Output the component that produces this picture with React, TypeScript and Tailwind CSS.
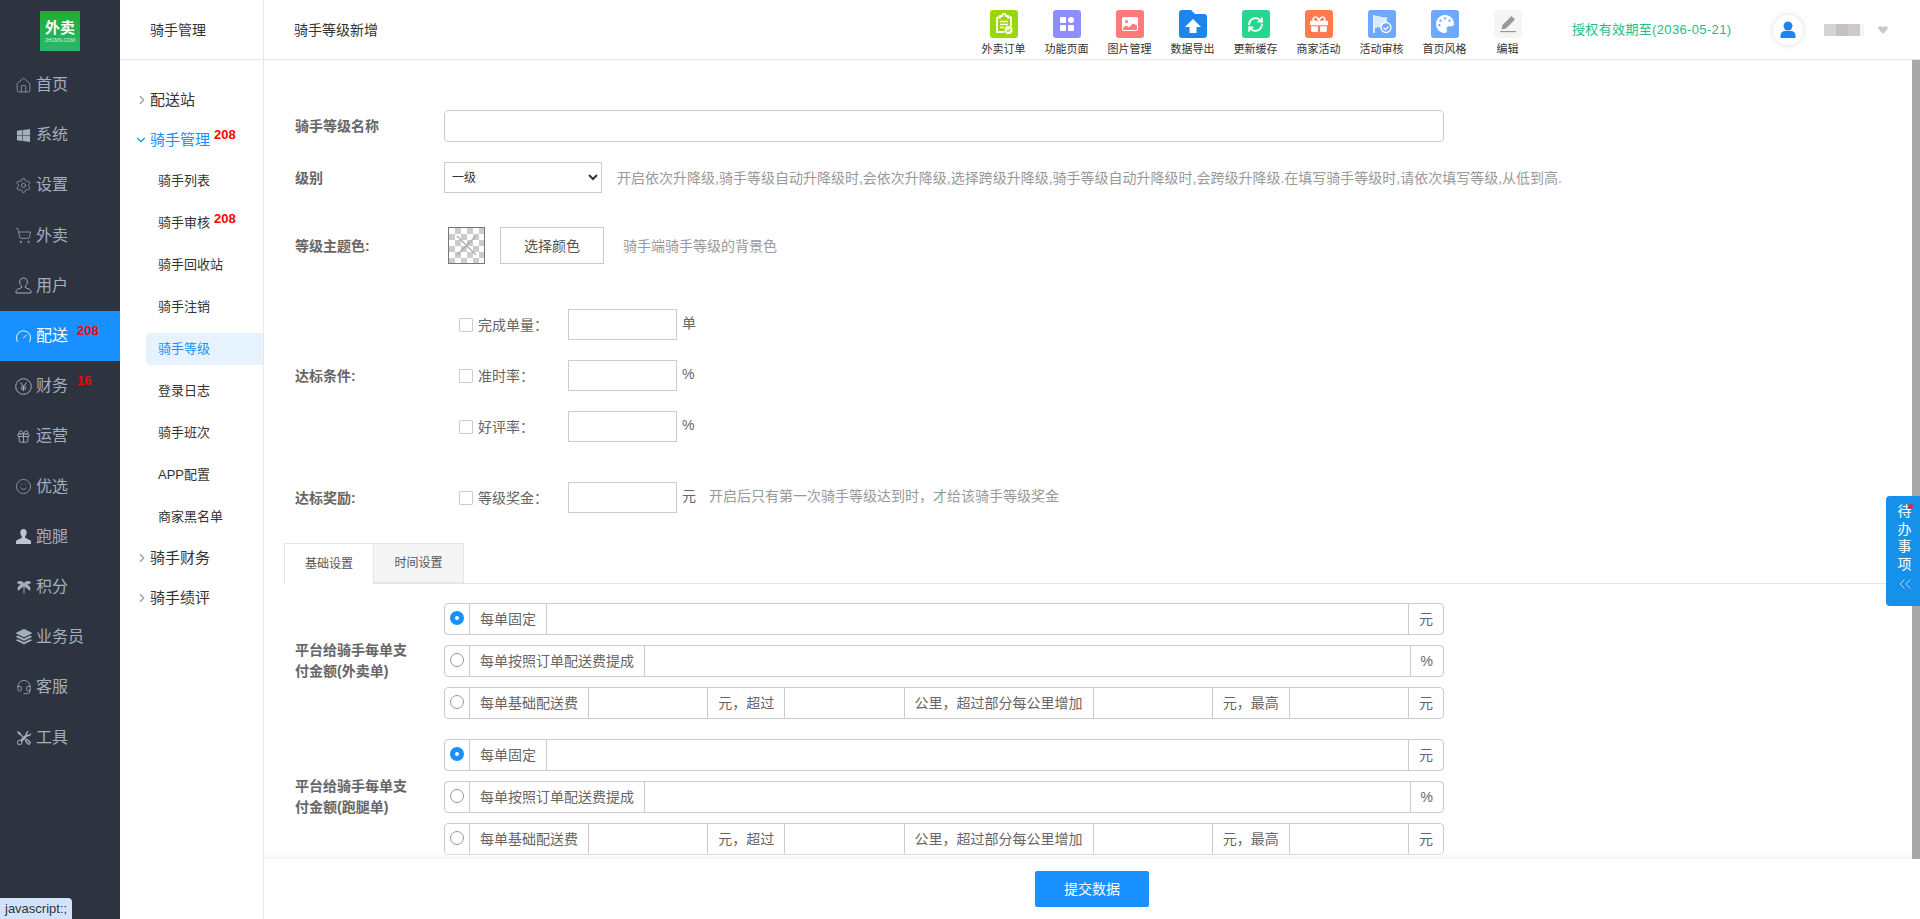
import type { ReactNode } from "react";
import {
  ChevronDown,
  ChevronRight,
  ChevronsLeft,
  Gauge,
  Gift,
  Headset,
  Home,
  RefreshCw,
  Settings,
  ShoppingCart,
  Smile,
} from "lucide-react";
import { BsFillImageFill, BsStack, BsTools } from "react-icons/bs";
import { FaGift, FaPalette, FaWindows } from "react-icons/fa";
import { PiTreePalmFill } from "react-icons/pi";

const navItems: { label: string; icon: ReactNode; badge?: string; active?: boolean }[] = [
  { label: "首页", icon: <Home size={19} strokeWidth={1} /> },
  { label: "系统", icon: <FaWindows size={15} /> },
  { label: "设置", icon: <Settings size={19} strokeWidth={1} /> },
  { label: "外卖", icon: <ShoppingCart size={19} strokeWidth={1} /> },
  {
    label: "用户",
    icon: (
      <svg width="17" height="17" viewBox="0 0 17 17" fill="none" stroke="currentColor">
        <path d="M8.500 1c2.300 0 3.800 1.700 3.800 4 0 2-1 3.300-2 4v1.500l4 1.800c1 .4 1.700 1.200 1.700 2.200v1.500H1V14.500c0-1 .7-1.800 1.700-2.200l4-1.800V9c-1-.7-2-2-2-4 0-2.300 1.500-4 3.800-4z" />
      </svg>
    ),
  },
  { label: "配送", icon: <Gauge size={19} strokeWidth={1.3} />, badge: "208", active: true },
  {
    label: "财务",
    icon: (
      <svg width="17" height="17" viewBox="0 0 17 17" fill="none" stroke="currentColor">
        <circle cx="8.500" cy="8.500" r="7.800" />
        <path d="M5.500 4.500 8.500 8.500 11.500 4.500M8.500 8.500V13M5.800 9H11.200M5.800 11H11.200" />
      </svg>
    ),
    badge: "16",
  },
  { label: "运营", icon: <Gift size={15} strokeWidth={1.5} /> },
  { label: "优选", icon: <Smile size={17} strokeWidth={1} /> },
  {
    label: "跑腿",
    icon: (
      <svg width="15" height="15" viewBox="0 0 15 15" fill="#bcc6d2">
        <path d="M7.500 0c2 0 3.200 1.500 3.200 3.500 0 1.500-.7 3-1.500 3.700v1.500l5 2.500c.5.300.8.700.8 1.300V15H0v-2.500c0-.6.300-1 .8-1.300l5-2.500V7.200C5 6.500 4.300 5 4.300 3.500 4.300 1.500 5.500 0 7.500 0z" />
      </svg>
    ),
  },
  { label: "积分", icon: <PiTreePalmFill size={16} /> },
  { label: "业务员", icon: <BsStack size={16} /> },
  { label: "客服", icon: <Headset size={16} strokeWidth={1.2} /> },
  { label: "工具", icon: <BsTools size={14} /> },
];

const subItems: { label: string; badge?: string; active?: boolean }[] = [
  { label: "骑手列表" },
  { label: "骑手审核", badge: "208" },
  { label: "骑手回收站" },
  { label: "骑手注销" },
  { label: "骑手等级", active: true },
  { label: "登录日志" },
  { label: "骑手班次" },
  { label: "APP配置" },
  { label: "商家黑名单" },
];

const tools: { label: string; bg: string; icon: ReactNode }[] = [
  {
    label: "外卖订单",
    bg: "bg-[#9ad60c]",
    icon: (
      <svg width="18" height="22" viewBox="0 0 18 22" fill="none">
        <path d="M2 4.500h3V3h2a2 2 0 0 1 4 0h2v1.500h3v9M2 4.500V19h7" stroke="#fff" strokeWidth="1.800" />
        <path d="M5 8.500h8M5 11.500h8M5 14.500h4" stroke="#fff" strokeWidth="1.500" />
        <circle cx="13.500" cy="17" r="4" fill="#fff" />
        <path d="m11.500 17 1.500 1.500 2.500-2.500" stroke="#9ad60c" strokeWidth="1.200" />
      </svg>
    ),
  },
  {
    label: "功能页面",
    bg: "bg-[#8e8eff]",
    icon: (
      <div className="grid grid-cols-2 gap-[2px]">
        <div className="w-[6px] h-[6px] bg-white rounded-[1px]" />
        <div className="w-[6px] h-[6px] bg-white rounded-full" />
        <div className="w-[6px] h-[6px] bg-white rounded-[1px]" />
        <div className="w-[6px] h-[6px] bg-white rounded-[1px]" />
      </div>
    ),
  },
  { label: "图片管理", bg: "bg-[#ff7b7b]", icon: <BsFillImageFill size={16} color="#fff" /> },
  {
    label: "数据导出",
    bg: "",
    icon: (
      <svg width="28" height="28" viewBox="0 0 28 28">
        <path
          d="M0 3a3 3 0 0 1 3-3h9l4 4h9a3 3 0 0 1 3 3v18a3 3 0 0 1-3 3H3a3 3 0 0 1-3-3z"
          fill="#1c86ee"
        />
        <path d="M14 9l8 8h-4.500v6h-7v-6H6z" fill="#fff" />
      </svg>
    ),
  },
  { label: "更新缓存", bg: "bg-[#26d68d]", icon: <RefreshCw size={17} color="#fff" strokeWidth={2.6} /> },
  { label: "商家活动", bg: "bg-[#ff7a4d]", icon: <FaGift size={18} color="#fff" /> },
  {
    label: "活动审核",
    bg: "bg-[#6ea8ff]",
    icon: (
      <svg width="20" height="20" viewBox="0 0 20 20" fill="none">
        <path d="M2 1v18" stroke="#fff" strokeWidth="1.600" />
        <path d="M3 2c4-1 5 2 12 1v6a6 6 0 0 0-5 5c-2-1-4-1-7 0z" fill="#fff" opacity="0.75" />
        <circle cx="14" cy="13.500" r="5" fill="#6ea8ff" stroke="#fff" strokeWidth="1.300" />
        <path d="m11.500 13.500 2 2 3-3" stroke="#fff" strokeWidth="1.400" />
      </svg>
    ),
  },
  { label: "首页风格", bg: "bg-[#6ea8ff]", icon: <FaPalette size={18} color="#fff" /> },
  {
    label: "编辑",
    bg: "bg-[#f5f5f5]",
    icon: (
      <svg width="18" height="18" viewBox="0 0 18 18" fill="#999">
        <path d="M12.500 1 16 4.500 7 13.500l-4.500 1 1-4.500z" />
        <rect x="1" y="16" width="16" height="1.200" />
      </svg>
    ),
  },
];

function Badge({ text, className }: { text: string; className?: string }) {
  return (
    <span className={`text-[13px] font-bold leading-none text-[#ff0000] font-['Liberation_Sans',sans-serif] ${className ?? ""}`}>
      {text}
    </span>
  );
}

function Cell({ children }: { children: ReactNode }) {
  return (
    <div className="flex items-center px-[10px] border-l border-[#ccc] text-sm text-[#666] whitespace-nowrap">
      {children}
    </div>
  );
}

function GroupRow({ checked, children }: { checked?: boolean; children: ReactNode }) {
  return (
    <div className="flex w-[1000px] h-[32px] border border-[#ccc] rounded-[4px]">
      <div className="w-[24px] shrink-0 flex items-center pl-[5px] pb-[2px]">
        {checked ? (
          <div className="w-[14px] h-[14px] rounded-full bg-[#1890ff] flex items-center justify-center">
            <div className="w-[4px] h-[4px] rounded-full bg-white" />
          </div>
        ) : (
          <div className="w-[14px] h-[14px] rounded-full bg-white border border-[#999]" />
        )}
      </div>
      {children}
    </div>
  );
}

function GroupInput() {
  return <input className="flex-1 min-w-0 border-l border-[#ccc] outline-none" />;
}

function PayGroup({ kind }: { kind: string }) {
  return (
    <div className="flex items-center">
      <div className="w-[149px] shrink-0 text-sm font-bold leading-[21px] text-[#666]">
        <div className="w-[120px]">平台给骑手每单支付金额({kind})</div>
      </div>
      <div className="flex flex-col gap-[10px]">
        <GroupRow checked>
          <Cell>每单固定</Cell>
          <GroupInput />
          <Cell>元</Cell>
        </GroupRow>
        <GroupRow>
          <Cell>每单按照订单配送费提成</Cell>
          <GroupInput />
          <Cell>%</Cell>
        </GroupRow>
        <GroupRow>
          <Cell>每单基础配送费</Cell>
          <GroupInput />
          <Cell>元，超过</Cell>
          <GroupInput />
          <Cell>公里，超过部分每公里增加</Cell>
          <GroupInput />
          <Cell>元，最高</Cell>
          <GroupInput />
          <Cell>元</Cell>
        </GroupRow>
      </div>
    </div>
  );
}

function CheckRow({ label, unit, children }: { label: string; unit: string; children?: ReactNode }) {
  return (
    <div className="flex items-center h-[31px] pl-[15px]">
      <div className="w-[14px] h-[14px] mt-[1px] border border-[#ccc] rounded-[1px] shrink-0" />
      <div className="w-[95px] pl-[5px] text-sm text-[#666] shrink-0">{label}</div>
      <input className="w-[109px] h-[31px] border border-[#ccc] outline-none shrink-0" />
      <div className="ml-[5px] mb-[3px] text-sm text-[#666]">{unit}</div>
      {children}
    </div>
  );
}

export default function App() {
  return (
    <div className="relative flex h-screen w-full overflow-hidden bg-white font-['Liberation_Sans','Noto_Sans_CJK_SC',sans-serif]">
      {/* main dark menu */}
      <aside className="w-[120px] shrink-0 bg-[#2d3440] text-[#a4afbe]">
        <div className="h-[60px] pt-[11px] flex justify-center">
          <div className="w-[40px] h-[40px] bg-gradient-to-b from-[#22ad2e] to-[#27b86c] flex flex-col items-center pt-[7px]">
            <span className="text-[15px] leading-[20px] font-bold text-white">外卖</span>
            <span className="text-[5px] leading-[6px] -mt-[1px] text-white/80">JHCMS.COM</span>
          </div>
        </div>
        {navItems.map((item) => (
          <div
            key={item.label}
            className={`relative flex items-center h-[50.200px] pl-[15px] ${item.active ? "bg-[#1890ff] text-white" : ""}`}
          >
            <div className="w-[17px] flex justify-center shrink-0">{item.icon}</div>
            <span className="ml-[4px] text-base">{item.label}</span>
            {item.badge && <Badge text={item.badge} className="absolute left-[77px] top-[13px]" />}
          </div>
        ))}
      </aside>

      {/* second menu */}
      <aside className="w-[144px] shrink-0 border-r border-[#e8e8e8]">
        <div className="h-[60px] flex items-center pl-[30px] border-b border-[#e5e5e5] text-sm text-[#333]">
          骑手管理
        </div>
        <div className="pt-[20px]">
          <div className="flex items-center h-[40px] pl-[15px] text-[15px] text-[#333]">
            <ChevronRight size={14} color="#999" />
            <span className="ml-[1px]">配送站</span>
          </div>
          <div className="relative flex items-center h-[40px] pl-[14px] text-[15px] text-[#1890ff]">
            <ChevronDown size={14} color="#1890ff" />
            <span className="ml-[2px]">骑手管理</span>
            <Badge text="208" className="absolute left-[94px] top-[8px]" />
          </div>
          {subItems.map((item) => (
            <div key={item.label} className="relative h-[42px] pl-[26px] flex items-center">
              {item.active && (
                <div className="absolute left-[26px] right-0 top-[5px] h-[32px] rounded-l-[4px] bg-[#e6f3fe]" />
              )}
              <span className={`relative ml-[12px] text-[13px] ${item.active ? "text-[#1890ff]" : "text-[#333]"}`}>
                {item.label}
              </span>
              {item.badge && <Badge text={item.badge} className="absolute left-[94px] top-[10px]" />}
            </div>
          ))}
          <div className="flex items-center h-[40px] pl-[15px] text-[15px] text-[#333]">
            <ChevronRight size={14} color="#999" />
            <span className="ml-[1px]">骑手财务</span>
          </div>
          <div className="flex items-center h-[40px] pl-[15px] text-[15px] text-[#333]">
            <ChevronRight size={14} color="#999" />
            <span className="ml-[1px]">骑手绩评</span>
          </div>
        </div>
      </aside>

      <div className="flex-1 min-w-0 flex flex-col">
        {/* top bar */}
        <header className="h-[60px] shrink-0 flex items-center border-b border-[#e5e5e5]">
          <div className="ml-[30px] w-[678px] text-sm text-[#333] shrink-0">骑手等级新增</div>
          <div className="flex shrink-0">
            {tools.map((tool) => (
              <div key={tool.label} className="w-[63px] flex flex-col items-center pt-[10px] h-[59px]">
                <div className={`w-[28px] h-[28px] rounded-[3px] flex items-center justify-center ${tool.bg}`}>
                  {tool.icon}
                </div>
                <div className="mt-[4px] text-[11px] leading-[14px] text-[#333] whitespace-nowrap">{tool.label}</div>
              </div>
            ))}
          </div>
          <div className="ml-[33px] text-[13px] tracking-[0.35px] text-[#19be8c] whitespace-nowrap">授权有效期至(2036-05-21)</div>
          <div className="ml-[42px] w-[30px] h-[30px] rounded-full bg-white shadow-[0_0_6px_rgba(0,0,0,0.15)] flex items-center justify-center shrink-0">
            <svg width="18" height="18" viewBox="0 0 18 18" fill="#1c86ee">
              <circle cx="9" cy="5" r="4.500" />
              <path d="M1.500 17v-2.500a4.500 4.500 0 0 1 4.500-4.500h6a4.500 4.500 0 0 1 4.500 4.500V17z" />
            </svg>
          </div>
          <div className="ml-[21px] flex shrink-0">
            <div className="w-[12px] h-[12px] bg-[#d4d4d4]" />
            <div className="w-[12px] h-[12px] bg-[#c6c1c1]" />
            <div className="w-[12px] h-[12px] bg-[#cfcaca]" />
            <div className="w-[4px] h-[12px] bg-[#f3f6fb]" />
          </div>
          <svg className="ml-[14px] shrink-0" width="10" height="8" viewBox="0 0 10 8" fill="#c8c8c8">
            <path d="M0 2.500C0 .5 2-.3 5 1c3-1.300 5-.5 5 1.500L5 8z" />
          </svg>
        </header>

        <div className="flex-1 min-h-0 flex">
          <main className="flex-1 min-w-0 flex flex-col">
            {/* form */}
            <div className="flex-1 min-h-0 overflow-hidden pt-[50px] pl-[31px]">
              <div className="flex items-center">
                <div className="w-[149px] text-sm font-bold text-[#666] shrink-0">骑手等级名称</div>
                <input className="w-[1000px] h-[32px] border border-[#ccc] rounded-[4px] outline-none" />
              </div>

              <div className="flex items-center mt-[20px]">
                <div className="w-[149px] text-sm font-bold text-[#666] shrink-0">级别</div>
                <select className="w-[158px] h-[31px] border border-[#ccc] bg-white pl-[3px] text-xs text-[#333] outline-none shrink-0">
                  <option>一级</option>
                </select>
                <div className="ml-[15px] text-sm text-[#999] whitespace-nowrap">
                  开启依次升降级,骑手等级自动升降级时,会依次升降级,选择跨级升降级,骑手等级自动升降级时,会跨级升降级.在填写骑手等级时,请依次填写等级,从低到高.
                </div>
              </div>

              <div className="flex items-center mt-[34px]">
                <div className="w-[153px] text-sm font-bold text-[#666] shrink-0">等级主题色:</div>
                <div className="w-[37px] h-[37px] border border-[#777] bg-[repeating-conic-gradient(#ccc_0_25%,#fff_0_50%)] bg-size-[12px_12px] flex items-center justify-center shrink-0">
                  <svg width="21" height="21" viewBox="0 0 21 21" stroke="#aaa" strokeWidth="1.200">
                    <path d="M1 1 20 20M20 1 1 20" />
                  </svg>
                </div>
                <div className="ml-[15px] w-[104px] h-[37px] border border-[#ccc] flex items-center justify-center text-sm text-[#555] shrink-0">
                  选择颜色
                </div>
                <div className="ml-[19px] text-sm text-[#999]">骑手端骑手等级的背景色</div>
              </div>

              <div className="flex items-center mt-[45px]">
                <div className="w-[149px] text-sm font-bold text-[#666] shrink-0">达标条件:</div>
                <div className="flex flex-col gap-[20px]">
                  <CheckRow label="完成单量：" unit="单" />
                  <CheckRow label="准时率：" unit="%" />
                  <CheckRow label="好评率：" unit="%" />
                </div>
              </div>

              <div className="flex items-center mt-[40px]">
                <div className="w-[149px] text-sm font-bold text-[#666] shrink-0">达标奖励:</div>
                <CheckRow label="等级奖金：" unit="元">
                  <div className="ml-[13px] mb-[3px] text-sm text-[#999]">开启后只有第一次骑手等级达到时，才给该骑手等级奖金</div>
                </CheckRow>
              </div>

              {/* tabs */}
              <div className="flex h-[41px] mt-[30px] -ml-[11px] border-b border-[#e5e5e5]">
                <div className="w-[90px] h-[41px] border border-b-0 border-[#e5e5e5] bg-white flex items-center justify-center text-xs text-[#555]">
                  基础设置
                </div>
                <div className="w-[90px] h-[40px] border border-l-0 border-[#e5e5e5] bg-[#f5f5f5] flex items-center justify-center text-xs text-[#555]">
                  时间设置
                </div>
              </div>

              <div className="flex flex-col gap-[20px] mt-[19px]">
                <PayGroup kind="外卖单" />
                <PayGroup kind="跑腿单" />
              </div>
            </div>

            {/* submit bar */}
            <div className="relative shrink-0 h-[60px] bg-white flex justify-center pt-[12px] pl-[8px]">
              <div className="absolute left-0 right-0 -top-[8px] h-[8px] bg-gradient-to-b from-transparent to-[#f5f5f5]" />
              <div className="w-[114px] h-[36px] rounded-[2px] bg-[#1890ff] flex items-center justify-center text-sm text-white">
                提交数据
              </div>
            </div>
          </main>

          {/* scrollbar */}
          <div className="w-[8px] shrink-0">
            <div className="h-[799px] bg-[#a8a8a8]" />
          </div>
        </div>
      </div>

      {/* floating todo */}
      <div className="absolute right-0 top-[496px] w-[34px] h-[110px] rounded-l-[4px] bg-[#1591ea] text-white flex flex-col items-center pt-[7px] pl-[3px] text-sm leading-[17.500px]">
        <div className="relative">
          待
          <div className="absolute right-[-1px] top-[1px] w-[5px] h-[5px] rounded-full bg-[#f5222d]" />
        </div>
        <div>办</div>
        <div>事</div>
        <div>项</div>
        <ChevronsLeft size={20} strokeWidth={1} className="mt-[1px] text-[#cfe8ff]" />
      </div>

      {/* browser status bubble */}
      <div className="absolute left-0 bottom-0 h-[21px] px-[5px] rounded-tr-[4px] bg-[#d3e3fd] text-[13px] leading-[21px] text-[#333]">
        javascript:;
      </div>
    </div>
  );
}
